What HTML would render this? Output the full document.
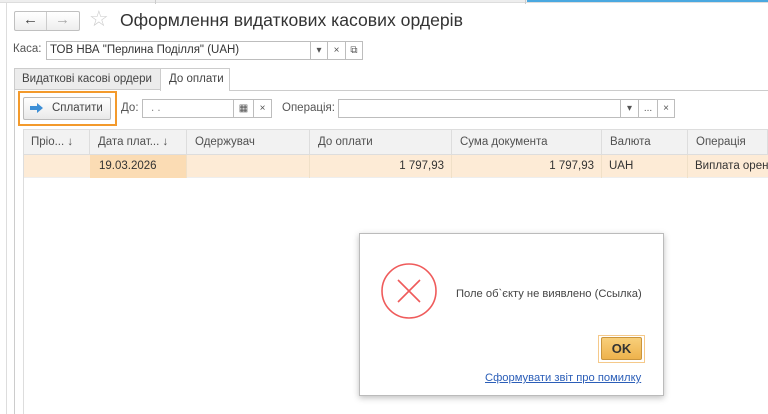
<!DOCTYPE html>
<html><head><meta charset="utf-8"><style>
*{box-sizing:border-box;margin:0;padding:0}
body{width:768px;height:414px;overflow:hidden;background:#fff;font-family:"Liberation Sans",sans-serif;font-size:11.5px;color:#404040;position:relative}
.a{position:absolute}
.inp{position:absolute;border:1px solid #bdbdbd;background:#fff;height:19px}
.btn{position:absolute;border:1px solid #bdbdbd;background:#fff;height:19px;text-align:center;line-height:17px;font-size:10px;color:#555}
.th{position:absolute;top:129px;height:26px;border-right:1px solid #ddd;line-height:26px;padding-left:8px;color:#505050}
.td{position:absolute;top:155px;height:23px;border-right:1px solid #f0e0c8;line-height:23px;padding:0 7px;color:#333}
</style></head><body>
<div class="a" style="left:0;top:0;width:768px;height:3px;background:#eee;border-bottom:1px solid #ddd"></div>
<div class="a" style="left:155px;top:0;width:1px;height:4px;background:#ccc"></div>
<div class="a" style="left:525px;top:0;width:1px;height:4px;background:#ccc"></div>
<div class="a" style="left:527px;top:0;width:241px;height:2px;background:#4aa8e0"></div>
<div class="a" style="left:6px;top:3px;width:1px;height:411px;background:#ddd"></div>
<div class="a" style="left:14px;top:11px;width:66px;height:20px;border:1px solid #c0c0c0;border-radius:2px;background:linear-gradient(#fff,#eee)"></div>
<div class="a" style="left:46px;top:12px;width:1px;height:18px;background:#ccc"></div>
<div class="a" style="left:23px;top:11px;font-size:15px;color:#444;font-weight:bold">&#8592;</div>
<div class="a" style="left:55px;top:11px;font-size:15px;color:#aaa;font-weight:bold">&#8594;</div>
<div class="a" style="left:89px;top:6px;font-size:22px;color:#ccc">&#9734;</div>
<div class="a" style="left:120px;top:10px;font-size:17.6px;color:#333">Оформлення видаткових касових ордерів</div>
<div class="a" style="left:13px;top:43px;color:#555">Каса:</div>
<div class="inp" style="left:46px;top:41px;width:265px;padding-left:3px;line-height:17px;color:#333">ТОВ НВА "Перлина Поділля" (UAH)</div>
<div class="btn" style="left:310px;top:41px;width:18px">▾</div>
<div class="btn" style="left:327px;top:41px;width:19px">×</div>
<div class="btn" style="left:345px;top:41px;width:18px">⧉</div>
<div class="a" style="left:14px;top:68px;width:147px;height:22px;background:#ececec;border:1px solid #ccc;line-height:20px;padding-left:7px;color:#444">Видаткові касові ордери</div>
<div class="a" style="left:160px;top:68px;width:70px;height:23px;background:#fff;border:1px solid #ccc;border-bottom:none;line-height:20px;padding-left:8px;color:#444">До оплати</div>
<div class="a" style="left:229px;top:90px;width:539px;height:1px;background:#ccc"></div>
<div class="a" style="left:14px;top:90px;width:1px;height:324px;background:#ccc"></div>
<div class="a" style="left:18px;top:91px;width:99px;height:35px;border:2px solid #f39a2c"></div>
<div class="a" style="left:23px;top:97px;width:88px;height:23px;border:1px solid #bbb;border-radius:2px;background:linear-gradient(#fff,#e9e9e9);line-height:21px;padding-left:28px;color:#444">Сплатити</div>
<svg class="a" style="left:29px;top:102px" width="16" height="12"><path d="M1 4h7V1l6 5-6 5V8H1z" fill="#3d8fd6"/></svg>
<div class="a" style="left:121px;top:102px;color:#555">До:</div>
<div class="inp" style="left:142px;top:99px;width:92px;padding-left:8px;line-height:16px;color:#888">. .</div>
<div class="btn" style="left:233px;top:99px;width:21px">▦</div>
<div class="btn" style="left:253px;top:99px;width:19px">×</div>
<div class="a" style="left:282px;top:102px;color:#555">Операція:</div>
<div class="inp" style="left:338px;top:99px;width:283px"></div>
<div class="btn" style="left:620px;top:99px;width:19px">▾</div>
<div class="btn" style="left:638px;top:99px;width:20px">...</div>
<div class="btn" style="left:657px;top:99px;width:18px">×</div>
<div class="a" style="left:23px;top:129px;width:745px;height:26px;background:#f2f2f2;border:1px solid #ddd"></div>
<div class="a" style="left:23px;top:155px;width:745px;height:23px;background:#fdebd6;border-bottom:1px solid #eee"></div>
<div class="a" style="left:90px;top:155px;width:97px;height:23px;background:#fbdcb4"></div>
<div class="a" style="left:23px;top:155px;width:1px;height:259px;background:#ddd"></div>
<div class="th" style="left:23px;width:67px">Пріо... ↓</div>
<div class="th" style="left:90px;width:97px">Дата плат... ↓</div>
<div class="th" style="left:187px;width:123px">Одержувач</div>
<div class="th" style="left:310px;width:142px">До оплати</div>
<div class="th" style="left:452px;width:150px">Сума документа</div>
<div class="th" style="left:602px;width:86px">Валюта</div>
<div class="th" style="left:688px;width:80px;border:none">Операція</div>
<div class="td" style="left:90px;width:97px;padding-left:9px">19.03.2026</div>
<div class="td" style="left:187px;width:123px"></div>
<div class="td" style="left:310px;width:142px;text-align:right">1 797,93</div>
<div class="td" style="left:452px;width:150px;text-align:right">1 797,93</div>
<div class="td" style="left:602px;width:86px">UAH</div>
<div class="td" style="left:688px;width:80px;border:none;white-space:nowrap">Виплата оренд</div>
<div class="a" style="left:359px;top:233px;width:305px;height:163px;background:#fff;border:1px solid #bbb;box-shadow:0 2px 6px rgba(0,0,0,.25)"></div>
<svg class="a" style="left:380px;top:262px" width="58" height="58"><circle cx="29" cy="29" r="27" fill="none" stroke="#ef5b5b" stroke-width="1.6"/><path d="M18 18L40 40M40 18L18 40" stroke="#ef5b5b" stroke-width="1.6"/></svg>
<div class="a" style="left:456px;top:288px;color:#444;font-size:11.2px">Поле об`єкту не виявлено (Ссылка)</div>
<div class="a" style="left:598px;top:335px;width:47px;height:28px;border:1px solid #f5c98a"></div>
<div class="a" style="left:601px;top:337px;width:41px;height:23px;border:1px solid #c9953e;border-radius:2px;background:linear-gradient(#f8cf7a,#eeb24c);text-align:center;line-height:21px;font-weight:bold;font-size:13px;color:#333">OK</div>
<div class="a" style="left:485px;top:372px;color:#2b5eb8;text-decoration:underline;font-size:11.2px">Сформувати звіт про помилку</div>
</body></html>
